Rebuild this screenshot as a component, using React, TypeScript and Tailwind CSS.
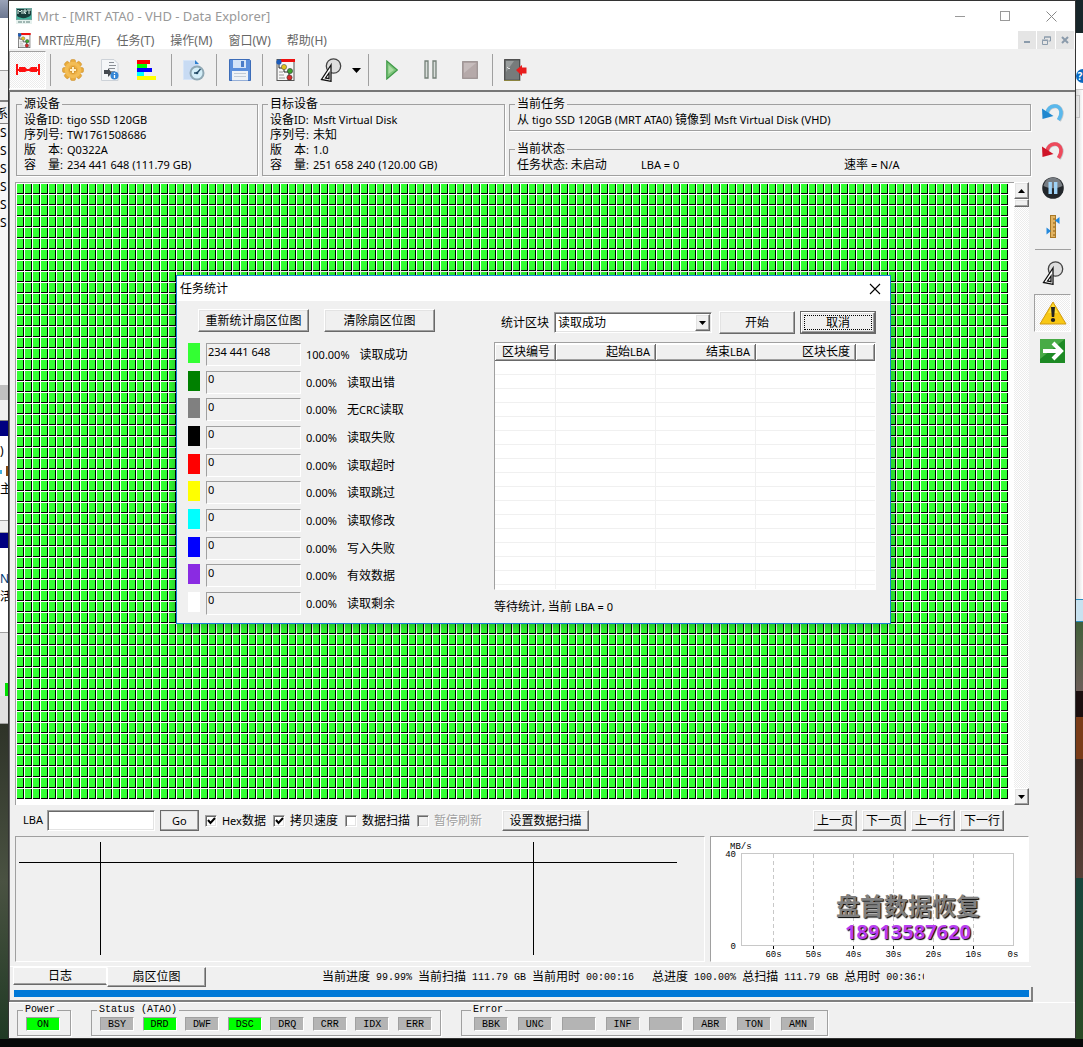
import { Fragment } from 'react';
import type { ReactNode } from 'react';
import clsx from 'clsx';

const raised =
  'bg-[#f0f0f0] border border-t-white border-l-white border-r-[#696969] border-b-[#696969] shadow-[inset_-1px_-1px_0_#a0a0a0,inset_1px_1px_0_#e3e3e3]';
const sunken = 'border border-t-[#a0a0a0] border-l-[#a0a0a0] border-r-white border-b-white';
const sunkenDeep =
  'border border-t-[#a0a0a0] border-l-[#a0a0a0] border-r-white border-b-white shadow-[inset_1px_1px_0_#696969,inset_-1px_-1px_0_#e3e3e3]';
const hatch = 'bg-[repeating-conic-gradient(#ffffff_0_25%,#ececec_0_50%)] bg-[length:2px_2px]';
const mono = "font-['Liberation_Mono','Noto_Sans_CJK_SC',monospace] text-[10px]";

const menus = ['MRT应用(F)', '任务(T)', '操作(M)', '窗口(W)', '帮助(H)'];

const sourceDevice = [
  ['设备ID:', 'tigo SSD 120GB'],
  ['序列号:', 'TW1761508686'],
  ['版　本:', 'Q0322A'],
  ['容　量:', '234 441 648 (111.79 GB)'],
];

const targetDevice = [
  ['设备ID:', 'Msft Virtual Disk'],
  ['序列号:', '未知'],
  ['版　本:', '1.0'],
  ['容　量:', '251 658 240 (120.00 GB)'],
];

const stats = [
  { id: 'ok', color: 'bg-[#33ff33]', count: '234 441 648', percent: '100.00%', name: '读取成功' },
  { id: 'error', color: 'bg-[#008000]', count: '0', percent: '0.00%', name: '读取出错' },
  { id: 'nocrc', color: 'bg-[#808080]', count: '0', percent: '0.00%', name: '无CRC读取' },
  { id: 'fail', color: 'bg-black', count: '0', percent: '0.00%', name: '读取失败' },
  { id: 'timeout', color: 'bg-[#ff0000]', count: '0', percent: '0.00%', name: '读取超时' },
  { id: 'skip', color: 'bg-[#ffff00]', count: '0', percent: '0.00%', name: '读取跳过' },
  { id: 'modify', color: 'bg-[#00ffff]', count: '0', percent: '0.00%', name: '读取修改' },
  { id: 'write', color: 'bg-[#0000ff]', count: '0', percent: '0.00%', name: '写入失败' },
  { id: 'valid', color: 'bg-[#8a2be2]', count: '0', percent: '0.00%', name: '有效数据' },
  { id: 'rest', color: 'bg-white', count: '0', percent: '0.00%', name: '读取剩余' },
];

const statusFlags = [
  { name: 'BSY' },
  { name: 'DRD', on: true },
  { name: 'DWF' },
  { name: 'DSC', on: true },
  { name: 'DRQ' },
  { name: 'CRR' },
  { name: 'IDX' },
  { name: 'ERR' },
];

const errorFlags = ['BBK', 'UNC', '', 'INF', '', 'ABR', 'TON', 'AMN'];

const metrics = [
  ['当前进度', '99.99%'],
  ['当前扫描', '111.79 GB'],
  ['当前用时', '00:00:16'],
  ['总进度', '100.00%'],
  ['总扫描', '111.79 GB'],
  ['总用时', '00:36:01'],
];

// Chinese runs are set one pixel larger than the Latin text around them
const Mixed = ({ text }: { text: string }) => (
  <>
    {text.split(/([\u3000-\u9fff]+)/).map((part, i) =>
      i % 2 === 1 ? (
        <span key={i} className="text-[12px]">{part}</span>
      ) : (
        <Fragment key={i}>{part}</Fragment>
      ),
    )}
  </>
);

/* ---------- Icons ---------- */

const AppIcon = () => (
  <svg width="16" height="16" viewBox="0 0 16 16">
    <rect width="16" height="16" fill="#6fa8a0" />
    <rect x="1" y="1" width="14" height="10" fill="#183c3a" />
    <path d="M2 6V2l2 2 2-2v4M8 6V2h2v2H8l2 2M11 2h4M13 2v4" stroke="#d8efe8" fill="none" />
    <path d="M1 8c4 3 10 3 14-1v4H1z" fill="#3fb39c" />
    <rect y="12" width="16" height="4" fill="#e6f1ee" />
    <path d="M2 14h4M7 14h2M10 14h4" stroke="#5b7d78" />
  </svg>
);

const TreeIcon = ({ size = 22 }: { size?: number }) => (
  <svg width={size} height={size} viewBox="0 0 22 22">
    <rect x="2" y=".5" width="17" height="21" fill="#f7f7f7" stroke="#555" />
    <rect x="6" y="0" width="14" height="3" fill="#f01010" />
    <path d="M4 4v5h5M9 10v3h5M14 14v5" stroke="#222" fill="none" />
    <path d="M4 13h4M4 16h5M4 19h6" stroke="#999" />
    <circle cx="4" cy="3" r="2.6" fill="#1c5bb8" />
    <circle cx="9" cy="8" r="2.6" fill="#e0c51e" stroke="#555" strokeWidth=".6" />
    <circle cx="15" cy="12" r="2.6" fill="#3aa52c" stroke="#333" strokeWidth=".6" />
    <circle cx="14.500" cy="18.500" r="2.600" fill="#d82a2a" stroke="#333" strokeWidth=".6" />
  </svg>
);

const LinkIcon = () => (
  <svg width="24" height="12" viewBox="0 0 24 12">
    <path d="M1 0v11M23 0v11M1 6h22" stroke="#ff1010" strokeWidth="2" />
    <path d="M3 3h6l2 2h2l2-2h6v5h-6l-2-1h-2L9 8H3z" fill="#ff1010" />
  </svg>
);

const GearIcon = () => (
  <svg width="22" height="22" viewBox="0 0 22 22">
    <g fill="#e9ab3c" stroke="#c98a25" strokeWidth=".5">
      {[0, 45, 90, 135].map((a) => (
        <rect key={a} x="8.500" y=".5" width="5" height="21" rx="1.500" transform={`rotate(${a} 11 11)`} />
      ))}
    </g>
    <circle cx="11" cy="11" r="8.300" fill="#f3bd55" />
    <circle cx="11" cy="11" r="5" fill="#edb045" />
    <path d="M11 7.500v7M7.500 11h7" stroke="#c98a25" strokeWidth="3" />
    <path d="M11 8v6M8 11h6" stroke="#ffeec4" strokeWidth="2" />
  </svg>
);

const DocInfoIcon = () => (
  <svg width="18" height="22" viewBox="0 0 18 22">
    <path d="M.5.5H13l4 4v17H.5z" fill="#f4f6f8" stroke="#cdd2d8" />
    <path d="M8 3.500h5M8 6.500h7M8 9.500h6M10 12.500h4" stroke="#8a8f96" />
    <path d="M3 11h4V9l4 5-4 4v-3H3z" fill="#454a50" />
    <circle cx="13.500" cy="16.500" r="4" fill="#3586d6" />
    <path d="M13.500 16v3M13.500 13.700v1.200" stroke="#fff" strokeWidth="1.300" />
  </svg>
);

const BarsIcon = () => (
  <svg width="20" height="20" viewBox="0 0 20 20" shapeRendering="crispEdges">
    <rect width="13" height="4" fill="#f00" />
    <rect y="4" width="10" height="4" fill="#0f0" />
    <rect y="8" width="15" height="4" fill="#00f" />
    <rect y="12" width="7" height="4" fill="#0ff" />
    <rect y="16" width="19" height="4" fill="#ff0" />
  </svg>
);

const DiskClockIcon = () => (
  <svg width="22" height="22" viewBox="0 0 22 22">
    <path d="M.5 1.500h11l5 5v14H.5z" fill="#c8dbf3" stroke="#d7e5f7" />
    <path d="M12 1l4 4h-4z" fill="#2d7fd0" />
    <circle cx="14" cy="14" r="7.500" fill="#8fa8b4" />
    <circle cx="14" cy="14" r="5.500" fill="#d4eef8" />
    <path d="M14 14l3.500-4M14 14h-3" stroke="#234c66" strokeWidth="1.400" />
    <circle cx="14" cy="14" r="1.300" fill="#234c66" />
  </svg>
);

const FloppyIcon = () => (
  <svg width="22" height="22" viewBox="0 0 22 22">
    <path d="M.5.500h20l1 1v20H.5z" fill="#5b8fdc" stroke="#3c6cb8" />
    <rect x="4" y="1" width="13" height="8" fill="#d4e4f8" />
    <rect x="12" y="2" width="3" height="6" fill="#4a7cc8" />
    <rect x="3" y="12" width="16" height="9.500" fill="#eef2f7" />
    <path d="M5 14.500h12M5 17.500h12" stroke="#c1cbd6" />
  </svg>
);

const CompassIcon = () => (
  <svg width="22" height="24" viewBox="0 0 22 24">
    <circle cx="13.500" cy="8" r="7.200" fill="#dedede" stroke="#444" strokeWidth="1.300" />
    <path d="M11 7L1.500 21.500l9.500 1.800z" fill="#fff" stroke="#111" strokeWidth="1.300" />
    <path d="M9 15l-3.500 5 3.500.700z" fill="#fff" stroke="#111" strokeWidth="1.300" />
  </svg>
);

const PlayIcon = () => (
  <svg width="12" height="20" viewBox="0 0 12 20">
    <path d="M.8 1v18L11.300 10z" fill="#7cc47a" stroke="#3f9a47" strokeWidth="1.200" />
    <path d="M2.500 5v9L8 10z" fill="#a9dba2" />
  </svg>
);

const PauseIcon = () => (
  <svg width="14" height="20" viewBox="0 0 14 20">
    <path d="M1 1h3v17H1zM9 1h3v17H9z" fill="#d9dedb" stroke="#748078" strokeWidth="1.300" />
  </svg>
);

const StopIcon = () => (
  <svg width="16" height="18" viewBox="0 0 16 18">
    <rect x=".7" y=".7" width="14.600" height="16.600" fill="#b5a9a9" stroke="#9a9090" strokeWidth="1.200" />
    <path d="M2 2h12L2 12z" fill="#c6bcbc" />
  </svg>
);

const DoorIcon = () => (
  <svg width="23" height="22" viewBox="0 0 23 22">
    <rect x=".7" y=".7" width="15" height="20.600" fill="#777b7b" stroke="#454545" strokeWidth="1.200" />
    <path d="M2 2h8L2 13z" fill="#989c9c" />
    <path d="M0 21.500h16" stroke="#8b843f" />
    <path d="M3 8l2 2 1-1" stroke="#ddd" fill="none" />
    <path d="M12 11l6-5v2.500h4.500v6H18V17z" fill="#e81c1c" />
  </svg>
);

const UndoIcon = ({ main, dark }: { main: string; dark: string }) => (
  <svg width="22" height="19" viewBox="0 0 22 19">
    <path d="M5 10.500C7 1.500 18 .5 19.500 9c.4 3-.5 5.500-2.500 8.500" fill="none" stroke="#c4c8cc" strokeWidth="4.400" />
    <path d="M5 10C7 1.500 17.500.5 19 8.500c.4 3-.5 5.500-2.500 8.500" fill="none" stroke={main} strokeWidth="3.600" />
    <path d="M0 5.500L.5 16l11-3z" fill={dark} />
  </svg>
);

const RoundPauseIcon = () => (
  <svg width="22" height="22" viewBox="0 0 22 22">
    <circle cx="11" cy="11" r="10.800" fill="#23272b" />
    <path d="M1.500 9C3 3 6.500.8 11 .8S19 3 20.500 9C14 12 8 12 1.500 9z" fill="#777c82" />
    <rect x="6.500" y="5" width="3.400" height="12" fill="#9fd3f7" />
    <rect x="12" y="5" width="3.400" height="12" fill="#9fd3f7" />
  </svg>
);

const RulerIcon = () => (
  <svg width="14" height="23" viewBox="0 0 14 23">
    <rect x="4.500" y=".5" width="5" height="22" fill="#e2b361" stroke="#a87826" />
    <path d="M7 4h2M7 8h2M7 12h2M7 16h2M7 20h2" stroke="#8a5f18" />
    <path d="M13.500 2v7L9 5.500zM.5 12.500v7L5 16z" fill="#2589dc" />
  </svg>
);

const WarningIcon = () => (
  <svg width="28" height="24" viewBox="0 0 28 24">
    <path d="M14 1L27 23H1z" fill="#f8c814" stroke="#d19a10" strokeLinejoin="round" />
    <path d="M14 3l5 9H9z" fill="#ffe13a" />
    <path d="M12 6h4l-.8 10h-2.400z" fill="#222" />
    <ellipse cx="14" cy="19" rx="2.200" ry="2" fill="#222" />
  </svg>
);

const ArrowIcon = () => (
  <svg width="25" height="24" viewBox="0 0 25 24">
    <rect width="25" height="24" fill="#1d8a24" />
    <path d="M0 0h25L0 20z" fill="#48ab46" />
    <path d="M3 12h17M13 4l8 8-8 8" stroke="#fff" strokeWidth="4" fill="none" />
  </svg>
);

const Caret = ({ up = false, wide = false }: { up?: boolean; wide?: boolean }) => (
  <svg width={wide ? 9 : 7} height={wide ? 5 : 4} viewBox="0 0 9 5" className={up ? 'rotate-180' : ''}>
    <path d="M0 0h9L4.500 5z" fill="#000" />
  </svg>
);

/* ---------- Building blocks ---------- */

const ToolButton = ({ label, pressed, className, children }: { label: string; pressed?: boolean; className?: string; children: ReactNode }) => (
  <button
    type="button"
    aria-label={label}
    className={clsx('flex h-[38px] shrink-0 items-center justify-center', className ?? 'w-[37px]', pressed && sunken, pressed && hatch)}
  >
    {children}
  </button>
);

const Separator = () => <div className="mx-1 my-[3px] w-px shrink-0 self-stretch bg-[#a0a0a0]" />;

const Button = ({ className, children }: { className?: string; children: string }) => (
  <button type="button" className={clsx('flex items-center justify-center whitespace-nowrap leading-4', raised, className)}>
    <Mixed text={children} />
  </button>
);

const Group = ({ title, className, children }: { title: string; className?: string; children: ReactNode }) => (
  <fieldset className={clsx('min-w-0 border border-[#a0a0a0] px-[7px] shadow-[1px_1px_0_#fff]', className)}>
    <legend className="-ml-[2px] whitespace-nowrap px-[2px] leading-[14px]">
      <Mixed text={title} />
    </legend>
    {children}
  </fieldset>
);

const DeviceInfo = ({ rows }: { rows: string[][] }) => (
  <dl className="pb-[3px] pt-px">
    {rows.map(([name, value]) => (
      <div key={name} className="flex gap-[3px] whitespace-nowrap leading-[15px]">
        <dt className="w-10"><Mixed text={name} /></dt>
        <dd><Mixed text={value} /></dd>
      </div>
    ))}
  </dl>
);

const CheckBox = ({ label, checked, disabled }: { label: string; checked?: boolean; disabled?: boolean }) => (
  <label className="flex items-center gap-[5px] whitespace-nowrap leading-4">
    <span className="relative flex">
      <input
        type="checkbox"
        defaultChecked={checked}
        disabled={disabled}
        className={clsx('peer size-3 appearance-none', sunkenDeep, disabled ? 'bg-[#f0f0f0]' : 'bg-white')}
      />
      <svg viewBox="0 0 12 12" className="pointer-events-none absolute inset-0 hidden size-3 peer-checked:block">
        <path d="M3 5l2.500 3L10 3" stroke="#000" strokeWidth="2" fill="none" />
      </svg>
    </span>
    <span className={disabled ? 'text-[#a0a0a0] [text-shadow:1px_1px_0_#fff]' : ''}>
      <Mixed text={label} />
    </span>
  </label>
);

const Flag = ({ name, on }: { name: string; on?: boolean }) => (
  <span className={clsx('flex h-[14px] w-[34px] items-center justify-center', sunken, on ? 'bg-[#00ff00]' : 'bg-[#b4b4b4]')}>
    {name}
  </span>
);

const FlagGroup = ({ title, className, children }: { title: string; className?: string; children: ReactNode }) => (
  <fieldset className={clsx('h-8 min-w-0 border border-[#a0a0a0] shadow-[1px_1px_0_#fff]', className)}>
    <legend className="-ml-[3px] whitespace-nowrap px-[2px] leading-3">{title}</legend>
    <div className="flex justify-between pt-px">{children}</div>
  </fieldset>
);

/* ---------- Sections ---------- */

const TitleBar = () => (
  <header className="bg-white text-[#999999]">
    <div className="flex h-[30px] items-center pl-[7px]">
      <AppIcon />
      <h1 className="ml-[5px] flex-1 text-[13px] leading-5">Mrt - [MRT ATA0 - VHD - Data Explorer]</h1>
      <button type="button" aria-label="Minimize" className="flex h-full w-[45px] items-center justify-center">
        <span className="h-px w-[10px] bg-[#999999]" />
      </button>
      <button type="button" aria-label="Maximize" className="flex h-full w-[45px] items-center justify-center">
        <span className="size-[10px] border border-[#999999]" />
      </button>
      <button type="button" aria-label="Close" className="flex h-full w-12 items-center justify-center">
        <svg width="11" height="11" viewBox="0 0 11 11">
          <path d="M.5.500l10 10M10.500.500l-10 10" stroke="#888" />
        </svg>
      </button>
    </div>
    <nav className="flex h-[18px] items-center pl-2 pr-px text-[12px] leading-4 text-[#666666]">
      <TreeIcon size={15} />
      <ul className="ml-[6px] flex flex-1 gap-4 whitespace-nowrap pt-px">
        {menus.map((item) => (
          <li key={item}>
            <button type="button">{item}</button>
          </li>
        ))}
      </ul>
      <div className="flex gap-px text-[#8b9bab]">
        <button type="button" aria-label="Minimize child" className="flex size-[18px] items-center justify-center bg-[#e5e5e5] pt-1">
          <span className="h-[2px] w-[6px] bg-[#8b9bab]" />
        </button>
        <button type="button" aria-label="Restore child" className="flex size-[18px] items-center justify-center bg-[#e5e5e5]">
          <svg width="9" height="9" viewBox="0 0 9 9" fill="none" stroke="currentColor">
            <path d="M2.500 3V1h6v4H6.500M2 1h7" />
            <path d="M.5 4.500h5v4h-5zM0 4h6" />
          </svg>
        </button>
        <button type="button" aria-label="Close child" className="flex size-[18px] items-center justify-center bg-[#e5e5e5]">
          <svg width="8" height="8" viewBox="0 0 8 8">
            <path d="M1 1l6 6M7 1L1 7" stroke="currentColor" strokeWidth="2" />
          </svg>
        </button>
      </div>
    </nav>
  </header>
);

const Toolbar = () => (
  <div className="flex items-center border-b-2 border-[#777777] pb-px pt-[2px]">
    <ToolButton label="Connect" pressed><LinkIcon /></ToolButton>
    <Separator />
    <div className="mr-[2px] flex">
      <ToolButton label="Settings" className="w-9"><GearIcon /></ToolButton>
      <ToolButton label="Information"><DocInfoIcon /></ToolButton>
      <ToolButton label="Color legend"><BarsIcon /></ToolButton>
    </div>
    <Separator />
    <ToolButton label="Schedule" className="w-9"><DiskClockIcon /></ToolButton>
    <Separator />
    <ToolButton label="Save"><FloppyIcon /></ToolButton>
    <Separator />
    <ToolButton label="Structure"><TreeIcon /></ToolButton>
    <Separator />
    <ToolButton label="Tools" className="w-9"><CompassIcon /></ToolButton>
    <ToolButton label="More tools" className="w-[15px]"><Caret wide /></ToolButton>
    <Separator />
    <div className="flex gap-0.5">
      <ToolButton label="Start"><PlayIcon /></ToolButton>
      <ToolButton label="Pause"><PauseIcon /></ToolButton>
      <ToolButton label="Stop"><StopIcon /></ToolButton>
    </div>
    <Separator />
    <ToolButton label="Exit" className="w-9"><DoorIcon /></ToolButton>
  </div>
);

const SideToolbar = () => (
  <div className="flex w-[44px] shrink-0 flex-col items-center border-r border-[#e3e3e3] pt-px">
    <ToolButton label="Undo"><UndoIcon main="#5ab8ec" dark="#1f87cf" /></ToolButton>
    <ToolButton label="Redo"><UndoIcon main="#ee4a5c" dark="#cf1428" /></ToolButton>
    <ToolButton label="Hold"><RoundPauseIcon /></ToolButton>
    <ToolButton label="Range"><RulerIcon /></ToolButton>
    <div className="my-1 h-px w-9 bg-[#a0a0a0]" />
    <ToolButton label="Map tools"><CompassIcon /></ToolButton>
    <div className="mt-0.5">
      <ToolButton label="Task statistics" pressed><WarningIcon /></ToolButton>
    </div>
    <ToolButton label="Go to"><ArrowIcon /></ToolButton>
  </div>
);

const Devices = () => (
  <div className="grid grid-cols-[242px_243px_minmax(0,1fr)] gap-1 pt-[5px] pl-[6px]">
    <Group title="源设备"><DeviceInfo rows={sourceDevice} /></Group>
    <Group title="目标设备"><DeviceInfo rows={targetDevice} /></Group>
    <div className="flex flex-col justify-between">
      <Group title="当前任务">
        <p className="whitespace-nowrap pb-[3px] pt-px leading-[15px]">
          <Mixed text="从 tigo SSD 120GB (MRT ATA0) 镜像到 Msft Virtual Disk (VHD)" />
        </p>
      </Group>
      <Group title="当前状态">
        <p className="flex whitespace-nowrap pb-[3px] pt-px leading-[15px]">
          <span className="w-[124px]"><Mixed text="任务状态: 未启动" /></span>
          <span className="w-[203px]">LBA = 0</span>
          <span><Mixed text="速率 = N/A" /></span>
        </p>
      </Group>
    </div>
  </div>
);

const StatRow = ({ stat }: { stat: (typeof stats)[number] }) => (
  <div className="flex h-[23px] items-center">
    <span className={clsx('h-5 w-3 shrink-0 self-start', stat.color)} />
    <input
      id={stat.id}
      readOnly
      value={stat.count}
      className={clsx('ml-[6px] h-[23px] w-[95px] shrink-0 bg-[#f0f0f0] px-px pb-[7px] outline-none', sunken)}
    />
    <label htmlFor={stat.id} className="ml-[5px] flex gap-[10px] whitespace-nowrap pt-px leading-4">
      <span>{stat.percent}</span>
      <span><Mixed text={stat.name} /></span>
    </label>
  </div>
);

const headCell =
  'h-[17px] border-r border-b border-[#696969] bg-[#f0f0f0] p-0 pr-[5px] text-right font-normal leading-4 shadow-[inset_1px_1px_0_#fff,inset_-1px_-1px_0_#a0a0a0]';

const BlockTable = () => (
  <div className={clsx('h-[248px] overflow-hidden bg-white pt-px', sunken)}>
    <table className="w-full table-fixed border-separate border-spacing-0 whitespace-nowrap">
      <thead>
        <tr>
          <th className={clsx(headCell, 'w-[61px]')}><Mixed text="区块编号" /></th>
          <th className={clsx(headCell, 'w-[100px]')}><Mixed text="起始LBA" /></th>
          <th className={clsx(headCell, 'w-[100px]')}><Mixed text="结束LBA" /></th>
          <th className={clsx(headCell, 'w-[100px]')}><Mixed text="区块长度" /></th>
          <th className={headCell} />
        </tr>
      </thead>
      <tbody>
        {Array.from({ length: 17 }, (_, row) => (
          <tr key={row}>
            {[0, 1, 2, 3].map((col) => (
              <td key={col} className="h-[14px] border-r border-b border-[#f0f0f0] p-0" />
            ))}
            <td className="h-[14px] border-b border-[#f0f0f0] p-0" />
          </tr>
        ))}
      </tbody>
    </table>
  </div>
);

const StatsDialog = () => (
  <section
    role="dialog"
    aria-labelledby="stats-title"
    className="absolute left-[161px] top-[93px] flex h-[349px] w-[715px] flex-col border border-[#1883d7] bg-[#f0f0f0] shadow-[0_2px_12px_rgba(0,0,0,0.35)]"
  >
    <div className="flex h-[25px] items-center justify-between bg-white pl-[3px] pr-[9px]">
      <h2 id="stats-title" className="text-[12px] leading-4">任务统计</h2>
      <button type="button" aria-label="关闭">
        <svg width="12" height="12" viewBox="0 0 12 12">
          <path d="M1 1l10 10M11 1L1 11" stroke="#000" strokeWidth="1.100" />
        </svg>
      </button>
    </div>
    <div className="flex flex-1 pb-2 pl-[11px] pr-[14px] pt-2">
      <div className="flex w-[306px] flex-col">
        <div className="flex gap-[15px] pl-[10px]">
          <Button className="h-[23px] w-[111px]">重新统计扇区位图</Button>
          <Button className="h-[23px] w-[111px]">清除扇区位图</Button>
        </div>
        <div className="mt-[11px] flex h-[272px] flex-col justify-between">
          {stats.map((stat) => (
            <StatRow key={stat.id} stat={stat} />
          ))}
        </div>
      </div>
      <div className="flex min-w-0 flex-1 flex-col pt-[2px]">
        <div className="flex items-center pl-[7px]">
          <label htmlFor="block-type" className="text-[12px] leading-4">统计区块</label>
          <div className="relative ml-[5px] flex-1">
            <select
              id="block-type"
              className={clsx('h-[21px] w-full appearance-none bg-white pl-[3px] text-[12px] leading-4', sunkenDeep)}
            >
              <option>读取成功</option>
            </select>
            <span className={clsx('pointer-events-none absolute inset-y-[2px] right-[2px] flex w-[15px] items-center justify-center', raised)}>
              <Caret />
            </span>
          </div>
          <Button className="ml-[7px] h-[23px] w-[76px]">开始</Button>
          <button type="button" className="ml-[5px] h-[23px] w-[76px] border border-[#696969]">
            <span className={clsx('block h-full p-[2px]', raised)}>
              <span className="flex h-full items-center justify-center border border-dotted border-black text-[12px] leading-4">取消</span>
            </span>
          </button>
        </div>
        <div className="mt-2">
          <BlockTable />
        </div>
        <p className="mt-[9px] leading-4"><Mixed text="等待统计, 当前 LBA = 0" /></p>
      </div>
    </div>
  </section>
);

const SectorMap = () => (
  <div className="relative ml-[5px] mt-[6px] flex min-h-[560px] flex-1">
    <div className="flex flex-1 border-l border-t border-[#a0a0a0] bg-white pb-[5px] pl-px pr-[5px] pt-px">
      <div className="flex-1 bg-[#33ff33] bg-[linear-gradient(to_right,transparent_7px,#fff_7px),linear-gradient(to_bottom,transparent_10px,#fff_10px),linear-gradient(to_right,transparent_6px,#000_6px),linear-gradient(to_bottom,transparent_9px,#000_9px)] bg-[length:8px_11px]" />
    </div>
    <div className={clsx('mr-[2px] flex w-[15px] flex-col', hatch)}>
      <button type="button" aria-label="Scroll up" className={clsx('flex h-[17px] items-center justify-center', raised)}><Caret up /></button>
      <div className={clsx('h-2', raised)} />
      <div className="flex-1" />
      <button type="button" aria-label="Scroll down" className={clsx('flex h-[17px] items-center justify-center', raised)}><Caret /></button>
    </div>
    <StatsDialog />
  </div>
);

const Controls = () => (
  <div className="flex h-[31px] shrink-0 items-center pl-[13px] pr-[27px]">
    <label htmlFor="lba">LBA</label>
    <input id="lba" className={clsx('ml-1 h-[21px] w-[108px] bg-white px-1 outline-none', sunkenDeep)} />
    <Button className="ml-[5px] h-[21px] w-[39px] outline outline-[#696969] -outline-offset-1">Go</Button>
    <div className="ml-[6px] flex gap-[7px]">
      <CheckBox label="Hex数据" checked />
      <CheckBox label="拷贝速度" checked />
      <CheckBox label="数据扫描" />
      <CheckBox label="暂停刷新" disabled />
    </div>
    <Button className="ml-5 h-[21px] w-[87px]">设置数据扫描</Button>
    <div className="ml-auto flex gap-[5px]">
      <Button className="h-[21px] w-11">上一页</Button>
      <Button className="h-[21px] w-11">下一页</Button>
      <Button className="h-[21px] w-11">上一行</Button>
      <Button className="h-[21px] w-11">下一行</Button>
    </div>
  </div>
);

const SpeedChart = () => (
  <div className={clsx('relative w-[319px] shrink-0 bg-white', sunken)}>
    <svg width="317" height="124" viewBox="0 0 317 124" className="font-['Liberation_Mono',monospace] text-[9px]">
      <rect x="30.500" y="16.500" width="272" height="92" fill="none" stroke="#c8c8c8" />
      {[60, 50, 40, 30, 20, 10].map((sec, i) => (
        <g key={sec}>
          <path d={`M${62.5 + i * 40} 17v91`} stroke="#c8c8c8" strokeDasharray="4 3" />
          <path d={`M${62.5 + i * 40} 109v3`} stroke="#000" />
          <text x={62.5 + i * 40} y="120" textAnchor="middle">{sec}s</text>
        </g>
      ))}
      <text x="302" y="120" textAnchor="middle">0s</text>
      <text x="19" y="12">MB/s</text>
      <text x="25" y="20" textAnchor="end">40</text>
      <text x="25" y="112" textAnchor="end">0</text>
    </svg>
    <div className="absolute left-[125px] top-[55px] flex flex-col items-center whitespace-nowrap font-bold">
      <span className="text-[24px] leading-7 text-[#808080] [text-shadow:1px_1px_1px_#000]">盘首数据恢复</span>
      <span className="font-['Noto_Sans',sans-serif] text-[20px] leading-6 text-[#b83cf0] [text-shadow:1px_1px_1px_#000]">18913587620</span>
    </div>
  </div>
);

const Panels = () => (
  <div className="flex h-[126px] shrink-0 gap-[5px] pl-[5px] pr-[2px]">
    <div className={clsx('min-w-0 flex-1', sunken)}>
      <svg width="100%" height="124">
        <path d="M3 25.500h658M84.500 5v113M517.500 5v113" stroke="#000" />
      </svg>
    </div>
    <SpeedChart />
  </div>
);

const BottomTabs = () => (
  <div className="mt-1 flex h-[21px] shrink-0 border-t border-white pl-[3px]">
    <button type="button" className="h-[18px] w-[94px] border border-r-white border-t-white border-l-white border-b-[#696969] text-[12px] leading-4 shadow-[inset_0_-1px_0_#a0a0a0]">
      日志
    </button>
    <button type="button" className="h-5 w-[99px] border border-t-transparent border-l-white border-b-[#696969] border-r-[#696969] text-[12px] leading-4 shadow-[inset_-1px_-1px_0_#a0a0a0]">
      扇区位图
    </button>
    <div className={clsx('ml-[116px] flex w-[602px] items-center gap-[6px] overflow-hidden whitespace-nowrap pt-[2px] leading-4', mono)}>
      {metrics.map(([name, value], i) => (
        <span key={name} className={clsx('flex shrink-0 items-center gap-[6px]', i === 3 && 'ml-3')}>
          <span className="text-[12px]">{name}</span>
          <span>{value}</span>
        </span>
      ))}
    </div>
  </div>
);

const StatusBar = () => (
  <footer className={clsx('flex h-[36px] shrink-0 gap-5 border-t border-white pl-2 pt-px', mono)}>
    <FlagGroup title="Power" className="w-[54px] px-2"><Flag name="ON" on /></FlagGroup>
    <FlagGroup title="Status (ATAO)" className="w-[350px] px-2">
      {statusFlags.map((flag) => (
        <Flag key={flag.name} name={flag.name} on={flag.on} />
      ))}
    </FlagGroup>
    <FlagGroup title="Error" className="w-[367px] px-3">
      {errorFlags.map((name, i) => (
        <Flag key={i} name={name} />
      ))}
    </FlagGroup>
  </footer>
);

// Slices of the windows and wallpaper behind the main window
const Behind = () => (
  <div className="w-2 shrink-0 overflow-hidden text-[12px] leading-[18px] text-black">
    <div className="h-[18px] bg-gradient-to-b from-[#9aa3b8] to-[#6d7891]" />
    <div className="h-[53px] border-b border-[#a0a0a0] bg-white" />
    <div className="h-[31px] border-b-2 border-[#808080] bg-[#f0f0f0]" />
    <div className="h-[22px] border-b border-[#808080] bg-[#f0f0f0] pt-[3px]">
      <div className="flex justify-end">系</div>
    </div>
    <div className="h-[261px] bg-[#f7f7f7]">
      {Array.from({ length: 6 }, (_, i) => (
        <div key={i} className="h-[18px]">S</div>
      ))}
    </div>
    <div className="h-[15px] bg-[#c0c0c0]" />
    <div className="h-[21px] border-b border-[#808080] bg-[#f0f0f0]" />
    <div className="h-[15px] bg-[#000080]" />
    <div className="h-[84px] bg-white">
      <div className="h-[30px] pt-[6px]">)</div>
      <div className="flex h-[10px] justify-between">
        <span className="mt-1 h-1 w-[2px] bg-[#40b0e0]" />
        <span className="w-[2px] bg-[#8a4a10]" />
      </div>
      <div className="pt-1">主</div>
    </div>
    <div className="h-[13px] border-y border-[#a0a0a0] bg-[#f0f0f0]" />
    <div className="h-[15px] bg-[#000080]" />
    <div className="h-[84px] bg-white pt-[22px]">
      <div className="text-[#003c74]">N</div>
      <div>活</div>
    </div>
    <div className="h-[51px] border-t border-[#a0a0a0] bg-[#e8e8e8]" />
    <div className="flex h-[13px] justify-end bg-[#e8e8e8]"><span className="w-[3px] bg-[#00e000]" /></div>
    <div className="h-[28px] border-b border-[#a0a0a0] bg-[#e0e0e0]" />
    <div className="h-[315px] bg-gradient-to-b from-[#2e3328] via-[#4a5242] to-[#1f3a24]" />
  </div>
);

const BehindRight = () => (
  <div className="w-[7px] shrink-0 overflow-hidden">
    <div className="h-[33px] bg-[#17262a]" />
    <div className="h-[36px] bg-white" />
    <div className="flex h-[21px] items-start border-b border-[#c8c8c8] bg-white">
      <span className="h-[14px] w-2 shrink-0 rounded-l-full bg-[#0a68c0] text-center text-[10px] font-bold leading-[14px] text-white">?</span>
    </div>
    <div className="h-[509px] bg-gradient-to-r from-[#d8d8d8] to-white pt-[5px]">
      <div className="h-[23px] w-1 border border-l-0 border-[#c0c0c0]" />
    </div>
    <div className="h-[23px] border-y border-[#2a8dc0] bg-[#c8e2f0]" />
    <div className="h-[69px] bg-gradient-to-b from-[#40603a] to-[#6b5d58]" />
    <div className="h-[26px] bg-[#1b0f0f]" />
    <div className="h-[42px] bg-[#7a3c18]" />
    <div className="h-[119px] bg-gradient-to-b from-[#3b2a22] to-[#564038]" />
    <div className="h-[161px] bg-gradient-to-b from-[#17453c] to-[#2a4a24]" />
  </div>
);

const App = () => (
  <div className="flex min-h-screen flex-col bg-[#060808] font-['Noto_Sans','Noto_Sans_CJK_SC',sans-serif] text-[11px] text-black">
    <div className="flex flex-1">
      <Behind />
      <main className="flex min-w-0 flex-1 flex-col border border-[#333333] bg-[#f0f0f0]">
        <TitleBar />
        <Toolbar />
        <div className="flex flex-1 border-l border-[#696969]">
          <div className="flex min-w-0 flex-1 flex-col">
            <Devices />
            <SectorMap />
            <Controls />
            <Panels />
            <BottomTabs />
            <div className="mr-[-2px] h-[15px] shrink-0 border-b-2 border-r-2 border-[#808080] pl-1 pr-[2px] pt-[3px]">
              <div role="progressbar" aria-label="总进度" aria-valuenow={100} className="h-[7px] bg-[#0078d7]" />
            </div>
          </div>
          <SideToolbar />
        </div>
        <StatusBar />
      </main>
      <BehindRight />
    </div>
    <div className="h-2" />
  </div>
);

export default App;
